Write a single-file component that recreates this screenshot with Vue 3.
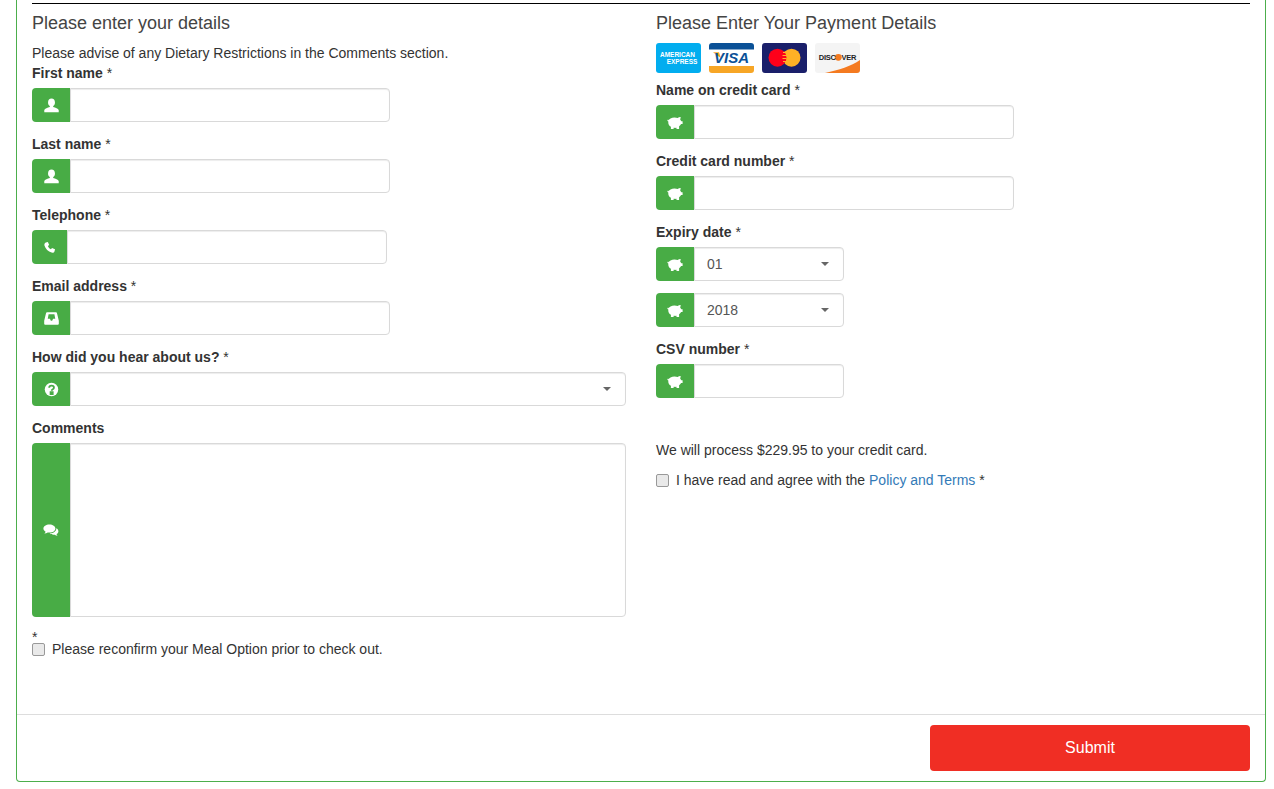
<script setup>
const icons = {
  user: { box: '0 0 16 16', d: 'M8 .6C5.700.6 4.300 2.400 4.300 4.700c0 1.700.8 3.100 1.900 3.900v1.100C3.800 10.300.9 11.300.3 12.900v2.200h15.400v-2.200c-.6-1.600-3.500-2.600-5.900-3.200V8.600c1.100-.8 1.900-2.200 1.900-3.900C11.700 2.400 10.300.6 8 .6z' },
  phone: { box: '0 0 16 16', d: 'M3.500 1.800 6 1.200 7.600 4.900 6 6.200C6.600 8 8 9.500 9.800 10.100L11.100 8.500 14.800 10.100 14.200 12.600C13.700 14.200 12.100 14.800 10.500 14.300 6.500 13.200 2.900 9.600 1.800 5.600 1.400 4 2 2.400 3.500 1.800z' },
  inbox: { box: '0 0 16 16', d: 'M3.200 1.300h9.600c.5 0 .8.3 1 .8l2 8.200v3.400c0 .6-.4 1-1 1H1.200c-.6 0-1-.4-1-1v-3.400l2-8.200c.2-.5.5-.8 1-.8zM4.900 3.400 4 8.300h2.300l1 2.200h1.400l1-2.200H12l-.9-4.900z', rule: 'evenodd' },
  question: { box: '0 0 16 16', d: 'M8 .8a7.200 7.200 0 1 0 0 14.400A7.200 7.200 0 0 0 8 .8z', hole: 'M5.500 6.200C5.500 4.700 6.700 3.900 8.100 3.900 9.500 3.900 10.600 4.700 10.600 6 10.600 7.700 8.200 7.700 8.200 9.300M7 10.800h2.300v2H7z' },
  comments: { box: '0 0 16 13', d: 'M6.400.5C3 .5.400 2.200.400 4.500c0 1.300.9 2.500 2.200 3.200-.2.800-.7 1.400-1.300 1.900 1.300 0 2.500-.4 3.400-1.100.5.100 1.100.100 1.700.100 3.400 0 6-1.800 6-4.100S9.800.5 6.400.5zM13.300 4.300c.2 2.700-2.400 5-6.600 5.300 1 .8 2.400 1.200 3.800 1.200.4 0 .8 0 1.200-.1.8.700 1.800 1.100 2.900 1.100-.5-.5-.9-1-1.100-1.700 1.100-.6 1.900-1.600 1.900-2.700 0-1.300-.8-2.400-2.100-3.100z' },
  piggy: { box: '0 0 16 13', d: 'M1.300 5.200C2 2.800 4.500 1.500 7.500 1.500c1.200 0 2.300.2 3.200.6.800-.7 1.900-1.100 3-1l-.5 2.600c.5.5.9 1 1.100 1.600h1.300v2.800h-1.500c-.5.9-1.200 1.600-2 2.100V13H9.500v-1.200c-.9.2-2 .2-2.900 0V13H3.900v-2.200C2.100 9.800 1 8 1.300 5.200zM1.400 5.500C.7 5.300.2 4.700.5 4 .8 3.500 1.400 3.600 1.700 4z' }
}
const leftFields = [
  { label: 'First name', icon: 'user', type: 'input' },
  { label: 'Last name', icon: 'user', type: 'input' },
  { label: 'Telephone', icon: 'phone', type: 'input', narrow: true },
  { label: 'Email address', icon: 'inbox', type: 'input' },
  { label: 'How did you hear about us?', icon: 'question', type: 'select' }
]
const rightFields = [
  { label: 'Name on credit card', icon: 'piggy', type: 'input' },
  { label: 'Credit card number', icon: 'piggy', type: 'input' }
]
</script>

<template>
  <div class="panel">
    <div class="panel-body">
      <hr class="rule" />
      <div class="columns">
        <section>
          <h4>Please enter your details</h4>
          <p class="note">Please advise of any Dietary Restrictions in the Comments section.</p>
          <div v-for="f in leftFields" :key="f.label" class="field">
            <label class="lbl">{{ f.label }} <span class="req">*</span></label>
            <div class="group">
              <span class="addon" :class="{ narrow: f.narrow }">
                <svg class="ico" :class="'ico-' + f.icon" :viewBox="icons[f.icon].box">
                  <path :d="icons[f.icon].d" :fill-rule="icons[f.icon].rule || 'nonzero'" fill="#fff" />
                  <path v-if="icons[f.icon].hole" :d="icons[f.icon].hole" class="hole" />
                </svg>
              </span>
              <span v-if="f.type === 'select'" class="select-wrap grow">
                <select class="control"><option></option></select>
              </span>
              <input v-else class="control text" type="text" />
            </div>
          </div>
          <div class="field">
            <label class="lbl">Comments</label>
            <div class="group tall">
              <span class="addon">
                <svg class="ico ico-comments" :viewBox="icons.comments.box"><path :d="icons.comments.d" fill="#fff" /></svg>
              </span>
              <textarea class="control area"></textarea>
            </div>
          </div>
          <div class="star">*</div>
          <label class="check"><input type="checkbox" /><span>Please reconfirm your Meal Option prior to check out.</span></label>
        </section>

        <section>
          <h4>Please Enter Your Payment Details</h4>
          <div class="cards">
            <svg class="card" viewBox="0 0 45 30">
              <rect width="45" height="30" rx="3" fill="#02adef" />
              <text x="21.500" y="14" text-anchor="middle" class="cardtext amex">AMERICAN</text>
              <text x="26" y="20.500" text-anchor="middle" class="cardtext amex">EXPRESS</text>
            </svg>
            <svg class="card" viewBox="0 0 45 30">
              <rect width="45" height="30" rx="3" fill="#fff" />
              <path d="M0 6.500V3a3 3 0 0 1 3-3h39a3 3 0 0 1 3 3v3.500z" fill="#0b5197" />
              <path d="M0 23h45v4a3 3 0 0 1-3 3H3a3 3 0 0 1-3-3z" fill="#f7a626" />
              <path d="M4 9.300h6l2 6z" fill="#f7a626" />
              <text x="22.500" y="20" text-anchor="middle" class="cardtext visa">VISA</text>
            </svg>
            <svg class="card" viewBox="0 0 45 30">
              <rect width="45" height="30" rx="3" fill="#1a1f6a" />
              <circle cx="29.500" cy="14.700" r="9" fill="#ffb125" />
              <circle cx="15.500" cy="14.700" r="9" fill="#fe001a" />
              <path d="M21 9.500h3.500M20.500 12.500h4M20.500 15.500h4M21 18.500h3.500" stroke="#ffb125" stroke-width="1.100" />
            </svg>
            <svg class="card" viewBox="0 0 45 30">
              <rect width="45" height="30" rx="3" fill="#f4f4f4" />
              <path d="M10 30C24 27 36 23 45 17v10a3 3 0 0 1-3 3z" fill="#f47a20" />
              <circle cx="23.300" cy="14.300" r="3.400" fill="#f47a20" />
              <text x="22.500" y="17" text-anchor="middle" class="cardtext disc">DISC<tspan fill="none">O</tspan>VER</text>
            </svg>
          </div>
          <div v-for="f in rightFields" :key="f.label" class="field">
            <label class="lbl">{{ f.label }} <span class="req">*</span></label>
            <div class="group">
              <span class="addon"><svg class="ico ico-piggy" :viewBox="icons.piggy.box"><path :d="icons.piggy.d" fill="#fff" /></svg></span>
              <input class="control text" type="text" />
            </div>
          </div>
          <div class="field">
            <label class="lbl">Expiry date <span class="req">*</span></label>
            <div class="group">
              <span class="addon"><svg class="ico ico-piggy" :viewBox="icons.piggy.box"><path :d="icons.piggy.d" fill="#fff" /></svg></span>
              <span class="select-wrap short"><select class="control"><option>01</option></select></span>
            </div>
          </div>
          <div class="field bare">
            <div class="group">
              <span class="addon"><svg class="ico ico-piggy" :viewBox="icons.piggy.box"><path :d="icons.piggy.d" fill="#fff" /></svg></span>
              <span class="select-wrap short"><select class="control"><option>2018</option></select></span>
            </div>
          </div>
          <div class="field">
            <label class="lbl">CSV number <span class="req">*</span></label>
            <div class="group">
              <span class="addon"><svg class="ico ico-piggy" :viewBox="icons.piggy.box"><path :d="icons.piggy.d" fill="#fff" /></svg></span>
              <input class="control short" type="text" />
            </div>
          </div>
          <p class="process">We will process $229.95 to your credit card.</p>
          <label class="check"><input type="checkbox" /><span>I have read and agree with the <a href="#">Policy and Terms</a> *</span></label>
        </section>
      </div>
    </div>
    <div class="panel-footer">
      <button class="submit" type="button">Submit</button>
    </div>
  </div>
</template>

<style>
html, body { background: #fff; }
</style>

<style scoped>
.panel {
  width: 1250px;
  margin-left: 16px;
  box-sizing: border-box;
  border: 1px solid #4cae4c;
  border-top: 0;
  border-radius: 0 0 4px 4px;
  font-family: "Liberation Sans", Arial, sans-serif;
  font-size: 14px;
  line-height: 20px;
  color: #333;
}
.panel-body { padding: 3px 15px 55px; }
.rule { margin: 0; border: 0; border-top: 1px solid #000; }
.columns { display: grid; grid-template-columns: 594px 594px; column-gap: 30px; }
h4 { margin: 9px 0 10px; font-size: 18px; font-weight: 500; line-height: 20px; color: #444; }
.note { margin: 0; }
.field { margin-bottom: 12px; }
.lbl { display: block; margin-bottom: 5px; font-weight: 700; }
.req { font-weight: 400; }
.group { display: flex; height: 34px; }
.group.tall { height: 174px; }
.addon {
  flex: none;
  width: 38px;
  display: flex;
  align-items: center;
  justify-content: center;
  background: #48ac45;
  border-radius: 4px 0 0 4px;
}
.addon.narrow { width: 35px; }
.ico { display: block; }
.ico-user, .ico-inbox, .ico-question { width: 15px; height: 15px; }
.ico-phone { width: 13px; height: 13px; }
.ico-comments { width: 16px; height: 13px; }
.ico-piggy { width: 16px; height: 13px; }
.hole { fill: none; stroke: #48ac45; stroke-width: 1.900; }
.control {
  box-sizing: border-box;
  height: 100%;
  display: block;
  margin: 0;
  border: 1px solid #d9d9d9;
  border-radius: 0 4px 4px 0;
  background: #fff;
  box-shadow: inset 0 1px 1px rgba(0, 0, 0, 0.075);
  font: inherit;
  color: #555;
  padding: 0 12px;
  outline: 0;
}
.text { width: 320px; }
.short { width: 150px; }
.area { flex: 1; resize: none; height: 100%; }
.select-wrap { position: relative; display: block; height: 100%; }
.select-wrap.grow { flex: 1; }
.select-wrap .control { width: 100%; appearance: none; -webkit-appearance: none; }
.select-wrap::after {
  content: "";
  position: absolute;
  right: 15px;
  top: 15px;
  border-top: 4px solid #666;
  border-left: 4px solid transparent;
  border-right: 4px solid transparent;
  pointer-events: none;
}
.star { height: 10px; line-height: 16px; }
.check { display: flex; align-items: center; gap: 7px; height: 20px; }
.check input {
  appearance: none;
  -webkit-appearance: none;
  box-sizing: border-box;
  flex: none;
  width: 13px;
  height: 13px;
  margin: 0;
  border: 1px solid #999;
  border-radius: 2px;
  background: #e9e9e9;
}
.check a { color: #337ab7; text-decoration: none; }
.cards { display: flex; gap: 8px; height: 30px; margin-bottom: 7px; }
.card { display: block; width: 45px; height: 30px; }
.cardtext { font-family: "Liberation Sans", Arial, sans-serif; font-weight: 700; }
.amex { font-size: 6.500px; fill: #fff; }
.visa { font-size: 15px; font-style: italic; fill: #0b5197; }
.disc { font-size: 7.500px; fill: #222; letter-spacing: -0.200px; }
.process { margin: 42px 0 10px; }
.panel-footer {
  border-top: 1px solid #ddd;
  padding: 10px 15px;
  display: flex;
  justify-content: flex-end;
}
.submit {
  width: 320px;
  height: 46px;
  border: 0;
  border-radius: 4px;
  background: #f02e24;
  color: #fff;
  font-family: inherit;
  font-size: 16px;
}
</style>
